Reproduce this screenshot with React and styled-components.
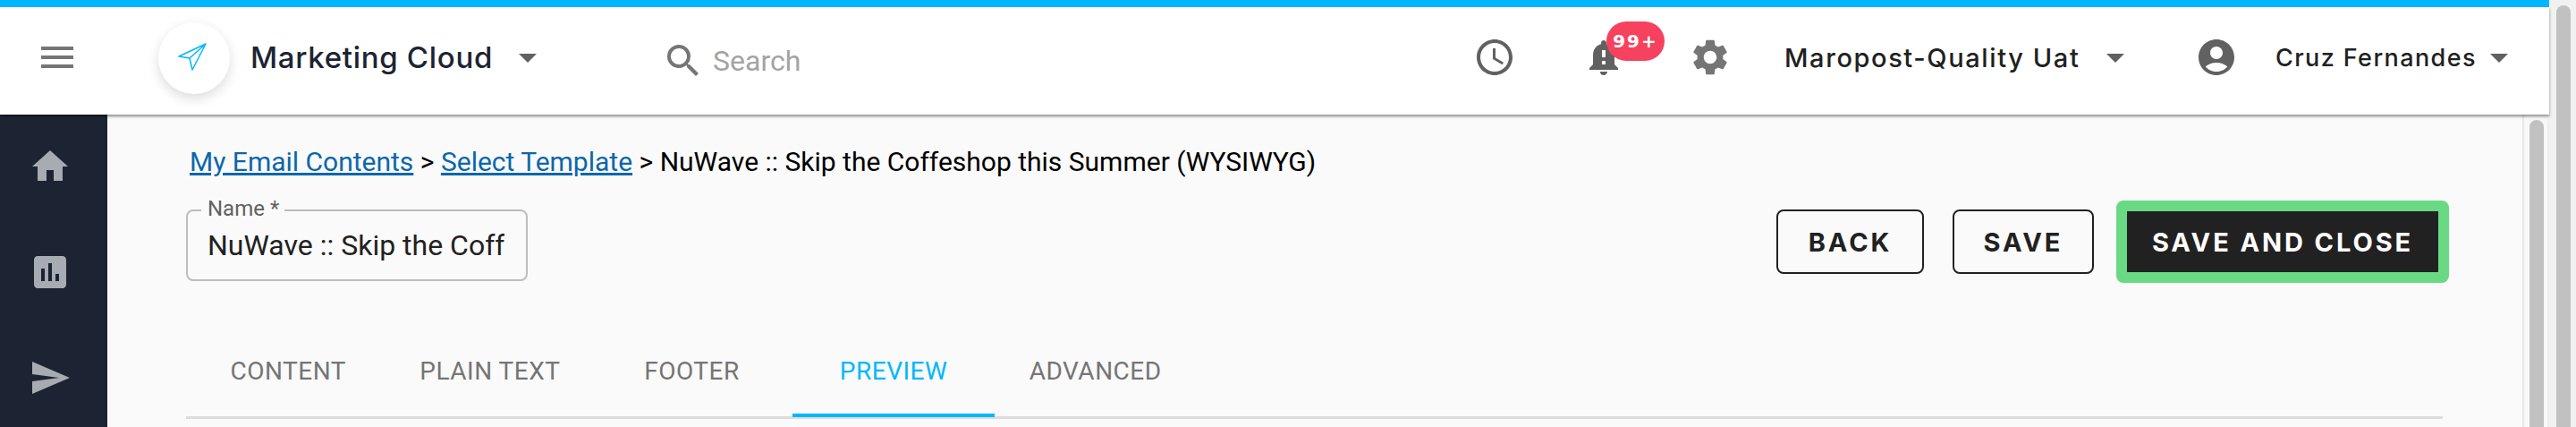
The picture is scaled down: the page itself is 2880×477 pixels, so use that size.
import React from "react";
import styled, {createGlobalStyle} from "styled-components";
import {
  MdMenu, MdArrowDropDown, MdSearch, MdAccessTime, MdNotificationImportant,
  MdSettings, MdAccountCircle, MdHome, MdAssessment, MdSend,
} from "react-icons/md";

const GlobalStyle = createGlobalStyle`
  html, body {
    margin: 0;
    height: 477px;
    overflow: hidden;
    background: #fafafa;
    font-family: Roboto, "Liberation Sans", sans-serif;
  }
  * { box-sizing: border-box; }
`

const tabs = ["Content", "Plain Text", "Footer", "Preview", "Advanced"];

const App = () => {
  return (<Page>
    <GlobalStyle/>
    <Main>
      <Stripe/>
      <Header>
        <MenuIcon><MdMenu size={48}/></MenuIcon>
        <LogoCircle>
          <svg width="34" height="32" viewBox="0 0 34 32" fill="none" stroke="#00b7ff" strokeWidth="1.5" strokeLinejoin="round">
            <path d="M32 1 L2 15 L14 17 L17 30 Z M32 1 L14 17"/>
          </svg>
        </LogoCircle>
        <BrandName>Marketing Cloud</BrandName>
        <Caret><MdArrowDropDown size={48}/></Caret>
        <SearchBox>
          <MdSearch size={48} color="#757575"/>
          <SearchText>Search</SearchText>
        </SearchBox>
        <RightGroup>
          <ClockIcon><MdAccessTime size={48}/></ClockIcon>
          <BellIcon>
            <MdNotificationImportant size={48}/>
            <Badge>99+</Badge>
          </BellIcon>
          <GearIcon><MdSettings size={48}/></GearIcon>
          <OrgName>Maropost-Quality Uat</OrgName>
          <Caret><MdArrowDropDown size={48}/></Caret>
          <UserIcon><MdAccountCircle size={48}/></UserIcon>
          <UserName>Cruz Fernandes</UserName>
          <Caret><MdArrowDropDown size={48}/></Caret>
        </RightGroup>
      </Header>
      <Body>
        <Sidebar>
          <SideIcon><MdHome size={48}/></SideIcon>
          <SideIcon><MdAssessment size={48}/></SideIcon>
          <SideIcon><MdSend size={48}/></SideIcon>
        </Sidebar>
        <Content>
          <Breadcrumb>
            <a href="#emails">My Email Contents</a> &gt; <a href="#templates">Select Template</a> &gt; NuWave :: Skip the Coffeshop this Summer (WYSIWYG)
          </Breadcrumb>
          <FormRow>
            <NameField>
              <NameLabel>Name *</NameLabel>
              <NameInput readOnly value="NuWave :: Skip the Coffeshop this Summer (WYSIWYG)"/>
            </NameField>
            <Actions>
              <OutlineButton $width={165}>Back</OutlineButton>
              <OutlineButton $width={158}>Save</OutlineButton>
              <PrimaryButton>Save and Close</PrimaryButton>
            </Actions>
          </FormRow>
          <TabBar>
            {tabs.map(tab => (
              <Tab key={tab} $active={tab === "Preview"}>{tab}</Tab>
            ))}
          </TabBar>
        </Content>
        <InnerRail><Thumb/></InnerRail>
      </Body>
    </Main>
    <OuterRail><Thumb/></OuterRail>
  </Page>);
}

const Page = styled.div`
  display: flex;
  width: 2880px;
  height: 477px;
  overflow: hidden;
`
const Main = styled.div`
  display: flex;
  flex-direction: column;
  width: 2850px;
`
const Stripe = styled.div`
  height: 8px;
  background: #00b7ff;
`
const Header = styled.header`
  position: relative;
  z-index: 2;
  display: flex;
  align-items: center;
  height: 120px;
  padding: 0 32px 8px 40px;
  background: #fff;
  box-shadow: 0 2px 3px rgba(0, 0, 0, .45);
`
const MenuIcon = styled.div`
  display: flex;
  color: #757575;
`
const LogoCircle = styled.div`
  display: flex;
  align-items: center;
  justify-content: center;
  width: 80px;
  height: 80px;
  margin: 2px 0 0 89px;
  border-radius: 50%;
  background: #fff;
  box-shadow: 0 5px 14px rgba(0, 0, 0, .14);
  svg { margin: -2px 0 0 -4px; }
`
const BrandName = styled.div`
  width: 286px;
  margin-left: 23px;
  font-family: Inter, sans-serif;
  font-size: 33px;
  font-weight: 500;
  letter-spacing: .7px;
  color: #1c2433;
`
const Caret = styled.div`
  display: flex;
  flex: none;
  color: #616161;
`
const SearchBox = styled.div`
  display: flex;
  align-items: center;
  gap: 9px;
  margin: 8px 0 0 126px;
`
const SearchText = styled.span`
  font-size: 32px;
  color: #a3a3a3;
`
const RightGroup = styled.div`
  display: flex;
  align-items: center;
  margin-left: auto;
`
const ClockIcon = styled.div`
  display: flex;
  color: #616161;
`
const BellIcon = styled.div`
  position: relative;
  display: flex;
  margin-left: 74px;
  color: #616161;
`
const Badge = styled.span`
  position: absolute;
  top: -16px;
  left: 27px;
  display: flex;
  align-items: center;
  justify-content: center;
  width: 65px;
  height: 44px;
  border-radius: 22px;
  background: #f6425f;
  color: #fff;
  font-family: "DejaVu Sans", sans-serif;
  font-size: 20px;
  font-weight: 700;
  letter-spacing: 2px;
`
const GearIcon = styled.div`
  display: flex;
  margin-left: 71px;
  color: #757575;
`
const OrgName = styled.div`
  width: 346px;
  margin-left: 59px;
  font-family: Inter, sans-serif;
  font-size: 29px;
  font-weight: 500;
  letter-spacing: 1.6px;
  color: #212121;
`
const UserIcon = styled.div`
  display: flex;
  margin-left: 65px;
  color: #616161;
`
const UserName = styled.div`
  width: 226px;
  margin-left: 42px;
  font-family: Inter, sans-serif;
  font-size: 27px;
  font-weight: 500;
  letter-spacing: 1.4px;
  color: #212121;
  white-space: nowrap;
`
const Body = styled.div`
  display: flex;
  flex: 1;
  min-height: 0;
`
const Sidebar = styled.nav`
  display: flex;
  flex-direction: column;
  flex: none;
  gap: 70px;
  width: 120px;
  padding: 34px 0 0 32px;
  background: #1c2433;
`
const SideIcon = styled.div`
  display: flex;
  color: #a7abb2;
`
const Content = styled.main`
  flex: 1;
  min-width: 0;
  padding: 35px 89px 0 88px;
  background: #fafafa;
`
const Breadcrumb = styled.div`
  height: 36px;
  padding-left: 4px;
  font-size: 30px;
  line-height: 36px;
  color: #000;
  white-space: nowrap;
  a { color: #0a67ad; }
`
const FormRow = styled.div`
  display: flex;
  justify-content: space-between;
  align-items: flex-start;
  height: 92px;
  margin-top: 25px;
`
const NameField = styled.div`
  position: relative;
  width: 382px;
  height: 80px;
  margin-top: 10px;
`
const NameLabel = styled.label`
  position: absolute;
  top: -15px;
  left: 17px;
  padding: 0 6px 0 7px;
  background: #fafafa;
  font-size: 24px;
  line-height: 28px;
  color: #616161;
`
const NameInput = styled.input`
  width: 100%;
  height: 100%;
  padding: 0 24px 0 22px;
  border: 2px solid #bdbdbd;
  border-radius: 8px;
  outline: none;
  background: transparent;
  font-family: inherit;
  font-size: 32px;
  color: #212121;
`
const Actions = styled.div`
  display: flex;
  align-items: center;
  height: 92px;
  margin-right: -7px;
`
const OutlineButton = styled.button`
  width: ${props => props.$width}px;
  height: 72px;
  margin-right: 32px;
  &:nth-child(2) { margin-right: 25px; }
  border: 2px solid #212121;
  border-radius: 8px;
  background: transparent;
  font-family: Inter, sans-serif;
  font-size: 29px;
  font-weight: 700;
  letter-spacing: 2.9px;
  text-transform: uppercase;
  color: #212121;
`
const PrimaryButton = styled.button`
  width: 372px;
  height: 92px;
  border: 12px solid #69d984;
  border-radius: 8px;
  background: #212121 padding-box;
  font-family: Inter, sans-serif;
  font-size: 29px;
  font-weight: 700;
  letter-spacing: 2.9px;
  text-transform: uppercase;
  color: #fff;
`
const TabBar = styled.div`
  display: flex;
  margin-top: 54px;
  padding-left: 1.5px;
  border-bottom: 3px solid #dcdcdc;
`
const Tab = styled.div`
  width: 225.6px;
  height: 96px;
  padding-bottom: 4px;
  display: flex;
  align-items: center;
  justify-content: center;
  margin-bottom: -1px;
  border-bottom: 4px solid ${props => props.$active ? "#00b7ff" : "transparent"};
  font-size: 28px;
  letter-spacing: .5px;
  text-transform: uppercase;
  color: ${props => props.$active ? "#00b7ff" : "#757575"};
`
const InnerRail = styled.div`
  flex: none;
  width: 30px;
  padding: 6px 6px 0 6px;
  border-left: 2px solid #e8e8e8;
  border-right: 2px solid #efefef;
  background: #f8f8f8;
`
const OuterRail = styled.div`
  flex: none;
  width: 30px;
  padding: 6px 6px 0 8px;
  background: #f1f1f1;
`
const Thumb = styled.div`
  width: 16px;
  height: 100%;
  border-radius: 8px 8px 0 0;
  background: #c1c1c1;
`

export default App;
